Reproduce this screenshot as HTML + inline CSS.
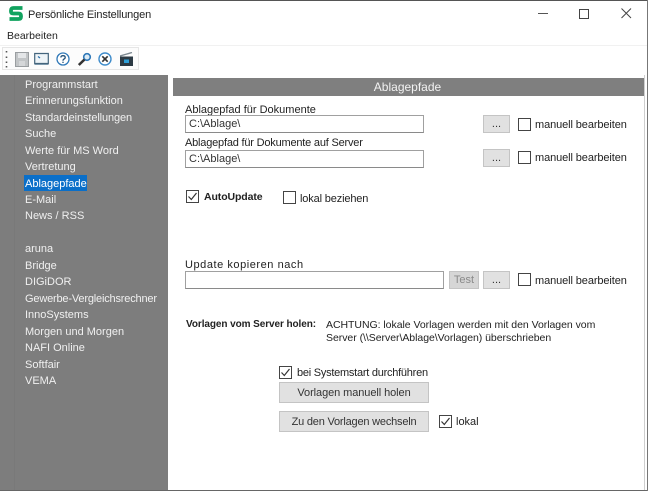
<!DOCTYPE html>
<html lang="de"><head><meta charset="utf-8"><title>Persönliche Einstellungen</title>
<style>
html,body{margin:0;padding:0;background:#fff}
#w{position:relative;width:648px;height:491px;overflow:hidden;background:#fff;font-family:"Liberation Sans",sans-serif;font-size:11px;color:#222}
#w div,#w svg{position:absolute}
.t{white-space:nowrap;line-height:14px;height:14px}
.n{color:#f0f0f0;left:25px;font-size:11px}
.i{background:#fff;border:1px solid #a0a0a0;border-bottom-color:#8a8a8a;box-sizing:border-box;height:18px;padding:2px 0 0 3px;line-height:13px;color:#333}
.b{background:#e1e1e1;border:1px solid #c4c4c4;box-sizing:border-box;text-align:center;color:#333}
.c{width:13px;height:13px;box-sizing:border-box;border:1px solid #444;background:#fff}
</style></head><body><div id="w">
<div style="left:0;top:0;width:648px;height:1px;background:#555"></div>
<svg style="left:9px;top:6px" width="14" height="15" viewBox="0 0 14 15"><path d="M13.500 2H4.500Q2 2 2 4.500V5.500Q2 7.500 4.500 7.500H9.500Q12 7.500 12 10V10.500Q12 13 9.500 13H.5" fill="none" stroke="#11a35f" stroke-width="3.800"/></svg>
<div class="t" style="left:28px;top:8px;font-size:11px;letter-spacing:-.14px;color:#222">Persönliche Einstellungen</div>
<div style="left:538px;top:13px;width:10px;height:1px;background:#555"></div>
<div style="left:579px;top:9px;width:10px;height:10px;box-sizing:border-box;border:1px solid #444"></div>
<svg style="left:621px;top:8px" width="11" height="11" viewBox="0 0 11 11"><path d="M.5.5 10 10M10 .5.5 10" stroke="#444" fill="none"/></svg>
<div class="t" style="left:7px;top:29px;font-size:10.500px">Bearbeiten</div>
<div style="left:0;top:45px;width:648px;height:1px;background:#f1f1f1"></div>
<div style="left:2px;top:47px;width:137px;height:23px;border:1px solid #e6e6e6;box-sizing:border-box;background:#fcfcfc"></div>
<svg style="left:5px;top:50px" width="3" height="19" viewBox="0 0 3 19"><path d="M1.500 1v1.500M1.500 6.500V8M1.500 11.500V13M1.500 16v1.500" stroke="#555" stroke-width="1.600"/></svg>
<svg style="left:15px;top:52px" width="14" height="15" viewBox="0 0 14 15"><path d="M.5.500H13.500V14.500H.5Z" fill="#c2c5c7" stroke="#9a9ea1"/><path d="M3 1H11V6H3Z" fill="#e4e6e8"/><path d="M4 9H10V14H4Z" fill="#d5d7d9"/></svg>
<svg style="left:34px;top:52px" width="15" height="14" viewBox="0 0 15 14"><path d="M.7 1.500H14.300V11.500H.7Z" fill="#eef4f8" stroke="#44657d" stroke-width="1.200"/><path d="M.5 12.500H14.500" stroke="#7d99ad"/><path d="M4 4.500 6 6" stroke="#2a6ea8" stroke-width="1.200"/></svg>
<svg style="left:56px;top:52px" width="14" height="14" viewBox="0 0 14 14"><circle cx="7" cy="7" r="6" fill="#fff" stroke="#2f78b8" stroke-width="1.300"/><path d="M4.800 5.500Q5 3.700 7 3.700Q9.200 3.700 9.200 5.400Q9.200 6.500 7.900 7.100Q7 7.500 7 8.700" fill="none" stroke="#24527a" stroke-width="1.300"/><path d="M7 9.700V11" stroke="#24527a" stroke-width="1.300"/></svg>
<svg style="left:77px;top:52px" width="15" height="15" viewBox="0 0 15 15"><circle cx="10" cy="5" r="3.300" fill="#dcebf5" stroke="#2f78b8" stroke-width="1.600"/><path d="M7.500 7.500 1.800 13" stroke="#333" stroke-width="2.600"/></svg>
<svg style="left:98px;top:52px" width="14" height="14" viewBox="0 0 14 14"><circle cx="7" cy="7" r="6" fill="#fff" stroke="#3f8ccb" stroke-width="1.400"/><path d="M4.300 4.300 9.700 9.700M9.700 4.300 4.300 9.700" stroke="#333" stroke-width="1.700"/></svg>
<svg style="left:120px;top:52px" width="13" height="14" viewBox="0 0 13 14"><path d="M0 4.500H13V14H0Z" fill="#2c3a44"/><path d="M0 4 12 .5" stroke="#7c8890" stroke-width="1.400"/><path d="M4 7.500H9V11H4Z" fill="#2d9fd8"/></svg>
<div style="left:0;top:75px;width:168px;height:416px;background:#7d7d7d"></div>
<div style="left:14px;top:75px;width:1px;height:416px;background:#797979"></div>
<div class="t n" style="top:78px">Programmstart</div>
<div class="t n" style="top:94px">Erinnerungsfunktion</div>
<div class="t n" style="top:111px;letter-spacing:-.12px">Standardeinstellungen</div>
<div class="t n" style="top:127px">Suche</div>
<div class="t n" style="top:144px">Werte für MS Word</div>
<div class="t n" style="top:160px">Vertretung</div>
<div style="left:24px;top:175px;width:63px;height:16px;background:#0a6fc9"></div>
<div class="t n" style="top:177px;color:#fff">Ablagepfade</div>
<div class="t n" style="top:193px">E-Mail</div>
<div class="t n" style="top:209px">News / RSS</div>
<div class="t n" style="top:242px">aruna</div>
<div class="t n" style="top:259px">Bridge</div>
<div class="t n" style="top:275px">DIGiDOR</div>
<div class="t n" style="top:292px;letter-spacing:-.18px">Gewerbe-Vergleichsrechner</div>
<div class="t n" style="top:308px">InnoSystems</div>
<div class="t n" style="top:325px">Morgen und Morgen</div>
<div class="t n" style="top:341px">NAFI Online</div>
<div class="t n" style="top:358px">Softfair</div>
<div class="t n" style="top:374px">VEMA</div>
<div style="left:173px;top:78px;width:471px;height:18px;background:#7f7f7f"></div>
<div class="t" style="left:172px;top:80px;width:471px;text-align:center;color:#f2f2f2;font-size:12px">Ablagepfade</div>
<div style="left:644px;top:75px;width:1px;height:416px;background:#cfcfcf"></div>
<div class="t" style="left:185px;top:103px">Ablagepfad für Dokumente</div>
<div class="i" style="left:185px;top:115px;width:239px">C:\Ablage\</div>
<div class="b" style="left:483px;top:115px;width:27px;height:18px;line-height:17px">...</div>
<div class="c" style="left:518px;top:118px"></div>
<div class="t" style="left:535px;top:118px;letter-spacing:-.1px">manuell bearbeiten</div>
<div class="t" style="left:185px;top:136px;letter-spacing:-.2px">Ablagepfad für Dokumente auf Server</div>
<div class="i" style="left:185px;top:150px;width:239px">C:\Ablage\</div>
<div class="b" style="left:483px;top:149px;width:27px;height:18px;line-height:17px">...</div>
<div class="c" style="left:518px;top:151px"></div>
<div class="t" style="left:535px;top:151px;letter-spacing:-.1px">manuell bearbeiten</div>
<div class="c" style="left:186px;top:190px"></div>
<svg style="left:187px;top:191px" width="11" height="11" viewBox="0 0 11 11"><path d="M1.500 5.500 4.300 8.500 9.500 2" fill="none" stroke="#333" stroke-width="1.200"/></svg>
<div class="t" style="left:204px;top:190px;font-weight:bold;font-size:10.500px;letter-spacing:-.1px">AutoUpdate</div>
<div class="c" style="left:283px;top:191px"></div>
<div class="t" style="left:300px;top:192px;letter-spacing:-.15px">lokal beziehen</div>
<div class="t" style="left:185px;top:258px;letter-spacing:.55px">Update kopieren nach</div>
<div class="i" style="left:185px;top:271px;width:259px"></div>
<div class="b" style="left:449px;top:271px;width:30px;height:18px;line-height:17px;color:#8a8a8a;background:#d6d6d6">Test</div>
<div class="b" style="left:483px;top:271px;width:27px;height:18px;line-height:17px">...</div>
<div class="c" style="left:518px;top:273px"></div>
<div class="t" style="left:535px;top:274px;letter-spacing:-.1px">manuell bearbeiten</div>
<div class="t" style="left:186px;top:318px;font-weight:bold;font-size:10px;letter-spacing:-.08px">Vorlagen vom Server holen:</div>
<div class="t" style="left:326px;top:318px;font-size:10.500px;letter-spacing:-.04px">ACHTUNG: lokale Vorlagen werden mit den Vorlagen vom</div>
<div class="t" style="left:326px;top:331px;font-size:10.500px;letter-spacing:-.04px">Server (\\Server\Ablage\Vorlagen) überschrieben</div>
<div class="c" style="left:279px;top:366px"></div>
<svg style="left:280px;top:367px" width="11" height="11" viewBox="0 0 11 11"><path d="M1.500 5.500 4.300 8.500 9.500 2" fill="none" stroke="#333" stroke-width="1.200"/></svg>
<div class="t" style="left:297px;top:366px;letter-spacing:-.25px">bei Systemstart durchführen</div>
<div class="b" style="left:279px;top:382px;width:150px;height:21px;line-height:21px;letter-spacing:-.08px">Vorlagen manuell holen</div>
<div class="b" style="left:279px;top:411px;width:150px;height:21px;line-height:21px;letter-spacing:-.2px">Zu den Vorlagen wechseln</div>
<div class="c" style="left:439px;top:415px"></div>
<svg style="left:440px;top:416px" width="11" height="11" viewBox="0 0 11 11"><path d="M1.500 5.500 4.300 8.500 9.500 2" fill="none" stroke="#333" stroke-width="1.200"/></svg>
<div class="t" style="left:456px;top:415px">lokal</div>
<div style="left:0;top:490px;width:648px;height:1px;background:#666"></div>
<div style="left:647px;top:0;width:1px;height:491px;background:#777"></div>
</div></body></html>
